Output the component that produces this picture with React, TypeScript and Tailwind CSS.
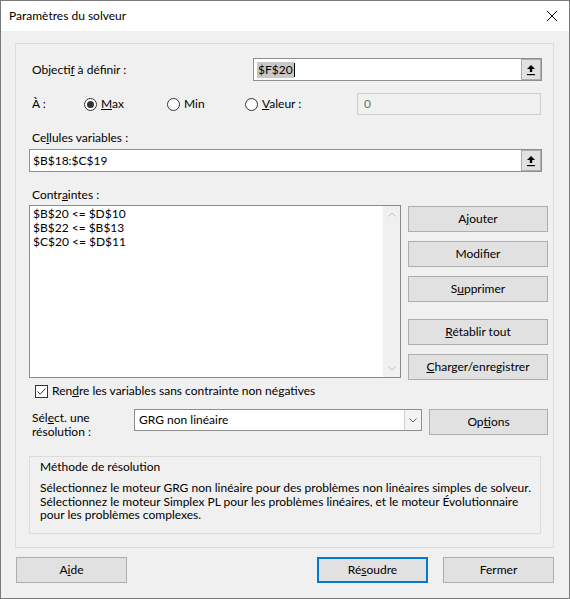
import type { ReactNode } from "react";

function Btn({
  children,
  className = "",
  primary = false,
}: {
  children: ReactNode;
  className?: string;
  primary?: boolean;
}) {
  return (
    <div
      className={`flex items-center justify-center h-[26px] bg-[#e1e1e1] text-[12px] text-black ${
        primary ? "border-2 border-[#0078d7]" : "border border-[#adadad]"
      } ${className}`}
    >
      {children}
    </div>
  );
}

function RefButton() {
  return (
    <div className="w-[20px] h-full flex items-center justify-center bg-[#e1e1e1] border border-[#adadad]">
      <svg width="10" height="12" viewBox="0 0 10 12">
        <path d="M5 1 L9 5 L6.2 5 L6.2 8 L3.8 8 L3.8 5 L1 5 Z" fill="#000" />
        <rect x="1" y="10" width="8" height="1.2" fill="#000" />
      </svg>
    </div>
  );
}

function Radio({ checked = false }: { checked?: boolean }) {
  return (
    <div className="w-[13px] h-[13px] rounded-full border border-[#333] bg-white flex items-center justify-center shrink-0">
      {checked && <div className="w-[7px] h-[7px] rounded-full bg-[#333]" />}
    </div>
  );
}

function Chevron({ up }: { up?: boolean }) {
  return (
    <svg width="8" height="5" viewBox="0 0 8 5">
      <path
        d={up ? "M0.5 4.5 L4 1 L7.5 4.5" : "M0.5 0.5 L4 4 L7.5 0.5"}
        fill="none"
        stroke="#c2c2c2"
        strokeWidth="1"
      />
    </svg>
  );
}

export default function App() {
  return (
    <div className="w-[570px] h-[599px] border border-[#7a7a7a] bg-[#f0f0f0] flex flex-col font-[Lato,sans-serif] text-[12px] text-black leading-[16px]">
      {/* title bar */}
      <div className="h-[30px] bg-white flex items-center justify-between pl-[8px] pr-[12px] shrink-0">
        <span className="text-[12px]">Paramètres du solveur</span>
        <svg width="10" height="10" viewBox="0 0 10 10">
          <path d="M0 0 L10 10 M10 0 L0 10" stroke="#000" strokeWidth="1" />
        </svg>
      </div>

      {/* main panel */}
      <div className="pl-[14px] pr-[15px] pt-[12px]">
        <div className="h-[505px] border border-[#dcdcdc] flex flex-col">
          {/* objectif */}
          <div className="mt-[14px] h-[23px] flex items-center">
            <div className="w-[237px] pl-[16px]">
              Objecti<u>f</u> à définir :
            </div>
            <div className="w-[289px] h-[23px] border border-[#8f8f8f] bg-white flex items-center">
              <div className="flex-1 flex items-center pl-[3px]">
                <span className="bg-[#c8c8c8] px-px">$F$20</span>
                <span className="w-px h-[14px] bg-black" />
              </div>
              <RefButton />
            </div>
          </div>

          {/* À : */}
          <div className="mt-[12px] h-[22px] flex items-center">
            <div className="w-[67px] pl-[16px]">À :</div>
            <div className="w-[84px] flex items-center gap-[4px] pl-px">
              <Radio checked />
              <span>
                <u>M</u>ax
              </span>
            </div>
            <div className="w-[78px] flex items-center gap-[4px]">
              <Radio />
              <span>Min</span>
            </div>
            <div className="w-[112px] flex items-center gap-[4px]">
              <Radio />
              <span>
                <u>V</u>aleur :
              </span>
            </div>
            <div className="w-[184px] h-[22px] border border-[#cccccc] bg-[#f0f0f0] flex items-center pl-[6px] text-[#6d6d6d]">
              0
            </div>
          </div>

          {/* cellules variables */}
          <div className="mt-[15px] h-[16px] pl-[16px]">
            Ce<u>l</u>lules variables :
          </div>
          <div className="mt-[3px] ml-[13px] w-[513px] h-[23px] border border-[#8f8f8f] bg-white flex items-center">
            <div className="flex-1 pl-[3px]">$B$18:$C$19</div>
            <RefButton />
          </div>

          {/* contraintes */}
          <div className="mt-[15px] h-[16px] pl-[16px]">
            Contr<u>a</u>intes :
          </div>
          <div className="mt-[2px] flex items-start">
            <div className="ml-[13px] w-[372px] h-[173px] border border-[#8a8a8a] bg-white flex">
              <div className="flex-1 pl-[3px] pt-px leading-[14px]">
                <div>$B$20 &lt;= $D$10</div>
                <div>$B$22 &lt;= $B$13</div>
                <div>$C$20 &lt;= $D$11</div>
              </div>
              <div className="w-[17px] bg-[#f0f0f0] flex flex-col items-center justify-between py-[6px]">
                <Chevron up />
                <Chevron />
              </div>
            </div>
            <div className="ml-[7px] w-[140px] flex flex-col mt-px">
              <Btn>
                <span>
                  A<u>j</u>outer
                </span>
              </Btn>
              <Btn className="mt-[9px]">Modifier</Btn>
              <Btn className="mt-[9px]">
                <span>
                  S<u>u</u>pprimer
                </span>
              </Btn>
              <Btn className="mt-[17px]">
                <span>
                  <u>R</u>établir tout
                </span>
              </Btn>
              <Btn className="mt-[9px]">
                <span>
                  <u>C</u>harger/enregistrer
                </span>
              </Btn>
            </div>
          </div>

          {/* checkbox */}
          <div className="mt-[3px] h-[16px] flex items-center pl-[19px] gap-[4px]">
            <div className="w-[13px] h-[13px] border border-[#333] bg-white flex items-center justify-center">
              <svg width="11" height="11" viewBox="0 0 11 11">
                <path d="M1.5 5.5 L4.2 8.2 L9.5 2.5" fill="none" stroke="#333" strokeWidth="1" />
              </svg>
            </div>
            <span>
              Ren<u>d</u>re les variables sans contrainte non négatives
            </span>
          </div>

          {/* résolution */}
          <div className="mt-[10px] h-[26px] flex items-start">
            <div className="w-[118px] pl-[16px] pt-[2px] leading-[14px]">
              <div>
                Sél<u>e</u>ct. une
              </div>
              <div>résolution :</div>
            </div>
            <div className="w-[288px] h-[22px] border border-[#8f8f8f] bg-white flex items-center">
              <div className="flex-1 pl-[4px]">GRG non linéaire</div>
              <div className="w-[17px] h-full border-l border-[#cfcfcf] bg-[#f3f3f3] flex items-center justify-center">
                <svg width="8" height="5" viewBox="0 0 8 5">
                  <path d="M0.5 0.5 L4 4 L7.5 0.5" fill="none" stroke="#606060" strokeWidth="1" />
                </svg>
              </div>
            </div>
            <Btn className="ml-[7px] w-[119px]">
              <span>
                Op<u>t</u>ions
              </span>
            </Btn>
          </div>

          {/* méthode */}
          <div className="mt-[21px] ml-[13px] w-[512px] h-[78px] border border-[#dcdcdc] pl-[10px] pt-[3px]">
            <div className="leading-[14px]">Méthode de résolution</div>
            <div className="mt-[7px] leading-[13.5px]">
              <div>Sélectionnez le moteur GRG non linéaire pour des problèmes non linéaires simples de solveur.</div>
              <div>Sélectionnez le moteur Simplex PL pour les problèmes linéaires, et le moteur Évolutionnaire</div>
              <div>pour les problèmes complexes.</div>
            </div>
          </div>
        </div>
      </div>

      {/* bottom buttons */}
      <div className="mt-[9px] flex justify-between pl-[15px] pr-[15px]">
        <Btn className="w-[111px]">
          <span>
            A<u>i</u>de
          </span>
        </Btn>
        <div className="flex gap-[15px]">
          <Btn primary className="w-[111px]">
            <span>
              Ré<u>s</u>oudre
            </span>
          </Btn>
          <Btn className="w-[111px]">Fermer</Btn>
        </div>
      </div>
    </div>
  );
}
